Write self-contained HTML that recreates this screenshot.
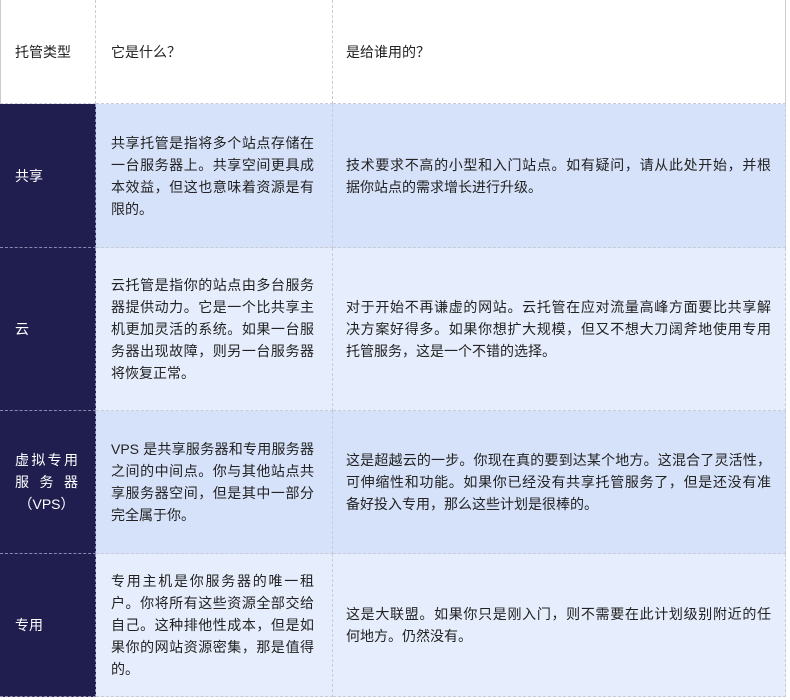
<html><head><style>
body{margin:0;width:790px;height:700px;background:#fff;position:relative;overflow:hidden;font-family:"Liberation Sans","Noto Sans CJK SC",sans-serif;font-size:14px;color:#222}
.c{position:absolute;box-sizing:border-box;border-right:1px dashed #c8ccd8;border-bottom:1px dashed #c8ccd8;display:flex;flex-direction:column;justify-content:center}
.d{background:#201e4f;color:#fff;border-color:#8a8ab0}
.a{background:#d6e2fa}.b{background:#e6edfc}
.t{line-height:22px}
.t div{text-align:justify;text-align-last:justify}
.t div.l{text-align-last:left}
</style></head><body>
<div style="position:absolute;left:0;top:0;width:786px;height:697px;border:1px solid #ccc;border-top:none;box-sizing:border-box"></div>
<div class="c" style="left:0;top:0;width:96px;height:104px;padding-left:15px">托管类型</div>
<div class="c" style="left:96px;top:0;width:237px;height:104px;padding-left:15px">它是什么？</div>
<div class="c" style="left:333px;top:0;width:453px;height:104px;padding-left:13px">是给谁用的？</div>

<div class="c d" style="left:0;top:104px;width:96px;height:144px;padding-left:15px">共享</div>
<div class="c a t" style="left:96px;top:104px;width:237px;height:144px;padding:0 18px 0 15px"><div>共享托管是指将多个站点存储在</div><div>一台服务器上。共享空间更具成</div><div>本效益，但这也意味着资源是有</div><div class="l">限的。</div></div>
<div class="c a t" style="left:333px;top:104px;width:453px;height:144px;padding:0 14px 0 13px"><div>技术要求不高的小型和入门站点。如有疑问，请从此处开始，并根</div><div class="l">据你站点的需求增长进行升级。</div></div>

<div class="c d" style="left:0;top:248px;width:96px;height:163px;padding-left:15px">云</div>
<div class="c b t" style="left:96px;top:248px;width:237px;height:163px;padding:0 18px 0 15px"><div>云托管是指你的站点由多台服务</div><div>器提供动力。它是一个比共享主</div><div>机更加灵活的系统。如果一台服</div><div>务器出现故障，则另一台服务器</div><div class="l">将恢复正常。</div></div>
<div class="c b t" style="left:333px;top:248px;width:453px;height:163px;padding:0 14px 0 13px"><div>对于开始不再谦虚的网站。云托管在应对流量高峰方面要比共享解</div><div>决方案好得多。如果你想扩大规模，但又不想大刀阔斧地使用专用</div><div class="l">托管服务，这是一个不错的选择。</div></div>

<div class="c d t" style="left:0;top:411px;width:96px;height:143px;padding:0 17px 0 15px"><div>虚拟专用</div><div>服务器</div><div class="l" style="text-align:center;text-align-last:center">（VPS）</div></div>
<div class="c a t" style="left:96px;top:411px;width:237px;height:143px;padding:0 18px 0 15px"><div>VPS 是共享服务器和专用服务器</div><div>之间的中间点。你与其他站点共</div><div>享服务器空间，但是其中一部分</div><div class="l">完全属于你。</div></div>
<div class="c a t" style="left:333px;top:411px;width:453px;height:143px;padding:0 14px 0 13px"><div>这是超越云的一步。你现在真的要到达某个地方。这混合了灵活性，</div><div>可伸缩性和功能。如果你已经没有共享托管服务了，但是还没有准</div><div class="l">备好投入专用，那么这些计划是很棒的。</div></div>

<div class="c d" style="left:0;top:554px;width:96px;height:143px;padding-left:15px">专用</div>
<div class="c b t" style="left:96px;top:554px;width:237px;height:143px;padding:0 18px 0 15px"><div>专用主机是你服务器的唯一租</div><div>户。你将所有这些资源全部交给</div><div>自己。这种排他性成本，但是如</div><div>果你的网站资源密集，那是值得</div><div class="l">的。</div></div>
<div class="c b t" style="left:333px;top:554px;width:453px;height:143px;padding:0 14px 0 13px"><div>这是大联盟。如果你只是刚入门，则不需要在此计划级别附近的任</div><div class="l">何地方。仍然没有。</div></div>
</body></html>
